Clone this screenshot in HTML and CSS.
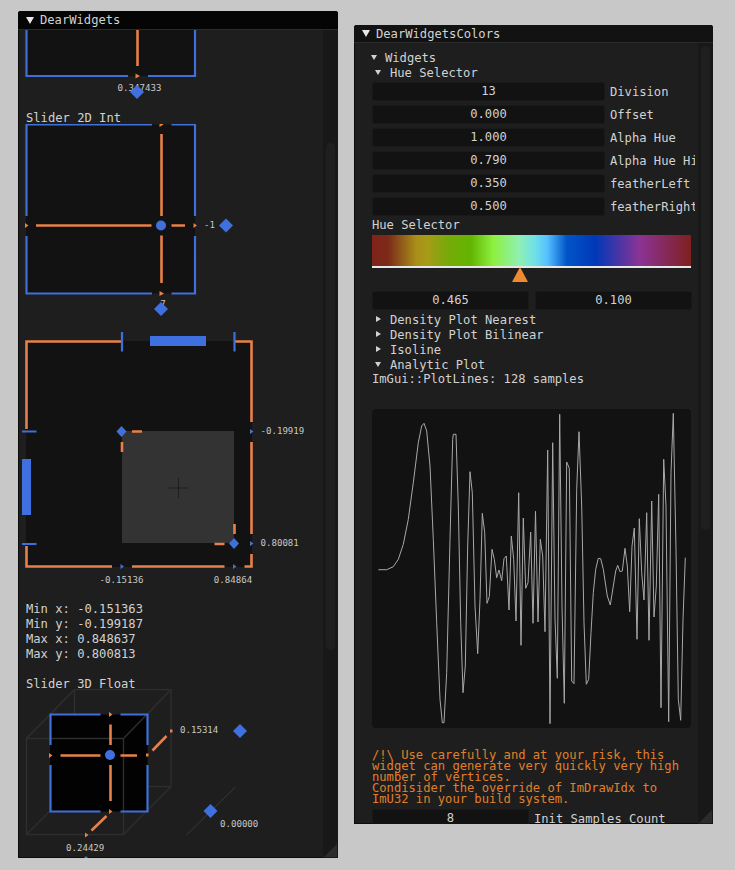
FILE: index.html
```html
<!DOCTYPE html>
<html>
	<head>
		<meta charset="utf-8">
		<title>DearWidgets</title>
		<link rel="stylesheet" href="styles.css">
	</head>
	<body>
		<div class="win win-main">
			<div class="title"><span class="arrow-big"></span>DearWidgets</div>
			<div class="win-body">
				<div class="content">
					<!-- viewBox values are screen coordinates, easier to compare with the shot -->
					<svg class="canvas" width="305" height="80" viewBox="18 30 305 80">
						<rect class="well" x="26" y="20" width="169" height="56"/>
						<path class="blue" d="M26.500 20V76H128M148 76H195V20"/>
						<path class="orange" d="M137.500 20V66"/>
						<path class="tip-o" d="M135.500 73.500l4.500 2.500l-4.500 2.500z"/>
						<text class="small" x="139.500" y="88" text-anchor="middle">0.347433</text>
						<path class="dia" d="M137 85l7 7l-7 7l-7-7z"/>
					</svg>
					<div class="line line-low">Slider 2D Int</div>
					<svg class="canvas" width="305" height="206" viewBox="18 124 305 206">
						<rect class="well" x="26" y="124.500" width="169" height="169"/>
						<path class="blue" d="M152 124.500H26.500V216M26.500 236V293.500H152M171.500 293.500H195V236M195 216V124.500H171.500"/>
						<path class="orange" d="M161.500 134V216M161.500 235.500V283M36 225.500H151.500M171.500 225.500H185"/>
						<circle class="dot" cx="161" cy="225.500" r="5"/>
						<path class="tip-o" d="M159.500 122l4 2.500l-4 2.500zM159.500 291l4.500 2.500l-4.500 2.500zM25 223l3.500 2.500l-3.500 2.500zM193.500 223l3.500 2.500l-3.500 2.500z"/>
						<text class="small" x="204" y="225.500">-1</text>
						<path class="dia" d="M226 218.500l7 7l-7 7l-7-7z"/>
						<text class="small" x="163" y="304" text-anchor="middle">7</text>
						<path class="dia" d="M161 302l7 7l-7 7l-7-7z"/>
					</svg>
					<svg class="canvas" width="305" height="271" viewBox="18 330 305 271">
						<rect class="well" x="26" y="341" width="226" height="226"/>
						<rect class="area" x="122" y="431" width="112" height="112"/>
						<path class="cross" d="M168.500 488H188.500M178.500 478V498"/>
						<path class="orange" d="M122 341.500H26.500V429M26.500 546V566.500H112M132 566.500H224.500M244.500 566.500H251.500V554M251.500 534V442M251.500 422V341.500H235"/>
						<path class="orange" d="M132 431.500H142M122 442V452M214.500 544H224.500M234.500 524V534"/>
						<path class="blue" d="M122 332V351.500M234.500 332V351.500M22 431.500H36.500M22 544H36.500"/>
						<path class="bar" d="M150 336H206V346H150zM22 459H31V515H22z"/>
						<path class="dia" d="M121.500 426l5 5.500l-5 5.500l-5-5.500zM234 538l5 5.500l-5 5.500l-5-5.500z"/>
						<path class="tip-b" d="M120.500 564l3.500 2.500l-3.500 2.500zM233 564l3.500 2.500l-3.500 2.500zM250 429l3.500 2.500l-3.500 2.500zM250 541l3.500 2.500l-3.500 2.500z"/>
						<text class="small" x="260.500" y="431">-0.19919</text>
						<text class="small" x="260.500" y="543">0.80081</text>
						<text class="small" x="121.500" y="580" text-anchor="middle">-0.15136</text>
						<text class="small" x="233" y="580" text-anchor="middle">0.84864</text>
					</svg>
					<div class="lines">
						<div class="line line-15">Min x: -0.151363</div>
						<div class="line line-15">Min y: -0.199187</div>
						<div class="line line-15">Max x: 0.848637</div>
						<div class="line line-15">Max y: 0.800813</div>
					</div>
					<div class="line line-3d">Slider 3D Float</div>
					<svg class="canvas" width="305" height="169" viewBox="18 689 305 169">
						<path class="wire" d="M74.500 689.500H171V786.500H74.500zM26.500 738.500L74.500 689.500M26.500 834.500L50 811"/>
						<rect class="well-3d" x="50" y="714.500" width="97.500" height="97"/>
						<path class="wire" d="M26.500 738.500H123.500V834.500H26.500zM123.500 738.500L171 689.500M123.500 834.500L171 786.500"/>
						<path class="blue" d="M100.500 714.500H50.500V745M50.500 765V811.500H100.500M120.500 811.500H147.500V765M147.500 745V714.500H120.500"/>
						<path class="orange" d="M110.500 724.500V745M110.500 765V801M60.500 755.500H100.500M120.500 755.500H137"/>
						<path class="orange" d="M152.500 750.500L166.500 736M91.500 830.500L106.500 816"/>
						<circle class="dot" cx="110" cy="755" r="5"/>
						<path class="tip-o" d="M109 712l3.500 2.500l-3.500 2.500zM109 809l3.500 2.500l-3.500 2.500zM49 753l3.500 2.500l-3.500 2.500zM146 753.500h2.500v3h-2.500zM85 832.500l3.500 2.500l-3.500 2.500zM170 729.500h2.500v3h-2.500z"/>
						<text class="small" x="180" y="730">0.15314</text>
						<path class="dia" d="M240 724l7 7l-7 7l-7-7z"/>
						<path class="wire-thin" d="M186.500 835L235.500 787"/>
						<path class="dia" d="M210.500 804l7 7l-7 7l-7-7z"/>
						<text class="small" x="220" y="824">0.00000</text>
						<text class="small" x="66" y="848">0.24429</text>
						<path class="dia" d="M86 856l4 4l-4 4l-4-4z"/>
					</svg>
				</div>
				<div class="scrollbar"><div class="thumb thumb-main"></div></div>
			</div>
			<div class="grip"></div>
		</div>

		<div class="win win-colors">
			<div class="title title-off"><span class="arrow-big"></span>DearWidgetsColors</div>
			<div class="win-body">
				<div class="content content-colors">
					<div class="node node-widgets"><span class="arrow-down"></span>Widgets</div>
					<div class="node"><span class="arrow-down"></span>Hue Selector</div>
					<div class="fields">
						<div class="row"><div class="field field-wide">13</div><div class="label">Division</div></div>
						<div class="row"><div class="field field-wide">0.000</div><div class="label">Offset</div></div>
						<div class="row"><div class="field field-wide">1.000</div><div class="label">Alpha Hue</div></div>
						<div class="row"><div class="field field-wide">0.790</div><div class="label">Alpha Hue Hide</div></div>
						<div class="row"><div class="field field-wide">0.350</div><div class="label">featherLeft</div></div>
						<div class="row"><div class="field field-wide">0.500</div><div class="label">featherRight</div></div>
					</div>
					<div class="line hue-title">Hue Selector</div>
					<div class="hue"></div>
					<div class="hue-line"></div>
					<svg class="hue-mark" width="319" height="14" viewBox="372 268 319 14">
						<path class="mark" d="M520 267L528 282H512z"/>
					</svg>
					<div class="row row-half">
						<div class="field field-half">0.465</div>
						<div class="field field-half">0.100</div>
					</div>
					<div class="node"><span class="arrow-right"></span>Density Plot Nearest</div>
					<div class="node"><span class="arrow-right"></span>Density Plot Bilinear</div>
					<div class="node"><span class="arrow-right"></span>Isoline</div>
					<div class="node"><span class="arrow-down"></span>Analytic Plot</div>
					<div class="line line-15">ImGui::PlotLines: 128 samples</div>
					<svg class="plot" width="319" height="319" viewBox="372 408 319 319">
						<polyline class="wave" points="378.3,568.7 386.7,568.7 393.3,565.7 398.3,558.3 403.3,543.3 408.3,518.3 413.3,481.7 418.3,441.7 421.7,425 424,422.3 426.7,430 430,465 433.3,538.3 436.7,621.7 440,698.3 442.3,721.7 444,721.7 446.7,671.7 450,538.3 452.7,438.3 453.3,433.3 456,433.3 458.3,505 460.7,621.7 463,691.7 465.3,665 467.7,545 470,470.7 472.3,491.7 475,605 477.7,652.7 480,598.3 482.3,512.3 484.7,531.7 487,602.3 489.3,595.7 492,548.3 494.3,558.3 496.7,576.7 499,569 501.7,579.7 504,557.7 506.3,555 509,609 511.3,535 513.7,558.3 516,620 518.7,491.7 521,644.3 523.3,517 525.7,587.3 528,581.7 530.7,531 533,622.3 535.5,510.3 538,621 540.3,538.3 542.7,555 545,630.7 547.7,449 550,722.7 552.7,441.7 555,618 557.3,677.3 559.7,413.3 562,605 564.3,702.3 566.7,461 569.3,467.3 571.7,680 574,682.7 576.7,488.3 579,430.7 581.7,505 584,621.7 586.3,683.3 588.7,678.3 591,631.7 593.3,591.7 595.7,568.3 598.3,557.3 600.7,557.7 603.3,568.3 607.3,595 610.3,604 613.3,585 615.7,570 617.7,564.3 620,570.7 622.3,570 625,547.3 627.3,565 629.7,610.7 632,545 634.3,527 637,638.3 639.3,517.7 641.7,571.7 644,599 646.7,511.7 649,639.3 651.7,500 654,616 656.3,585 658.7,493.3 661,706.7 663.7,458.3 666,505 668.7,720.7 671,471.7 673.3,412.3 676,548.3 678.3,698.3 680.7,719.3 683,618.3 685.3,556.7"/>
					</svg>
					<div class="warn">/!\ Use carefully and at your risk, this<br>widget can generate very quickly very high<br>number of vertices.<br>Condisider the override of ImDrawIdx to<br>ImU32 in your build system.</div>
					<div class="row row-last">
						<div class="field field-half">8</div>
						<div class="label">Init Samples Count</div>
					</div>
				</div>
				<div class="scrollbar"><div class="thumb thumb-colors"></div></div>
			</div>
			<div class="grip"></div>
		</div>
	</body>
</html>
```

FILE: styles.css
```css
*{
	margin: 0;
	padding: 0;
	box-sizing: border-box;
}
body{
	background: #c8c8c8;
	font-family: "DejaVu Sans Mono", monospace;
	font-size: 12.15px;
	color: #d2d2d2;
	overflow: hidden;
	height: 870px;
}
.win{
	position: absolute;
	display: flex;
	flex-direction: column;
	background: #1e1e1e;
	border-radius: 3px 3px 0 0;
	overflow: hidden;
	box-shadow: 0 0 0 1px #0c0c0c inset;
}
.win-main{
	left: 18px;
	top: 11px;
	width: 320px;
	height: 847px;
}
.win-colors{
	left: 354px;
	top: 25px;
	width: 359px;
	height: 799px;
}
.title{
	display: flex;
	align-items: center;
	height: 19px;
	flex: none;
	padding-left: 8px;
	background: #050505;
	border-bottom: 1px solid #2a2a2a;
}
.title-off{
	height: 18px;
	background: #121212;
	padding-left: 8px;
}
.arrow-big{
	width: 0;
	height: 0;
	border-left: 4px solid transparent;
	border-right: 4px solid transparent;
	border-top: 7px solid #e8e8e8;
	margin-right: 6px;
}
.win-body{
	display: flex;
	flex: 1;
	min-height: 0;
}
.content{
	width: 305px;
	overflow: hidden;
	padding-left: 8px;
}
.content-colors{
	width: 344px;
	padding: 7px 0 0 18px;
}
.canvas{
	display: block;
	margin-left: -8px;
}
.line{
	height: 14px;
	line-height: 14px;
	white-space: nowrap;
}
.line-low{
	line-height: 17px;
}
.line-15{
	height: 15px;
	line-height: 15px;
}
.lines .line-15{
	line-height: 17px;
}
.line-3d{
	height: 13px;
	line-height: 17px;
	margin-top: 15px;
}
.scrollbar{
	width: 15px;
	flex: none;
	background: #181818;
	padding: 0 3px;
}
.thumb{
	background: #1f1f1f;
	border-radius: 5px;
}
.thumb-main{
	height: 507px;
	margin-top: 113px;
}
.thumb-colors{
	height: 484px;
	margin-top: 3px;
}
.grip{
	position: absolute;
	right: 1px;
	bottom: 1px;
	width: 0;
	height: 0;
	border-left: 13px solid transparent;
	border-bottom: 13px solid #2c2c2c;
}

/* widget drawing */
.well{
	fill: #121212;
}
.well-3d{
	fill: #020202;
}
.area{
	fill: #333333;
}
.cross{
	fill: none;
	stroke: #1e1e1e;
	stroke-width: 1;
}
.blue{
	fill: none;
	stroke: #3f6fd8;
	stroke-width: 2.2;
}
.orange{
	fill: none;
	stroke: #e8804a;
	stroke-width: 2.6;
}
.bar, .dia, .dot{
	fill: #4070e0;
}
.tip-o{
	fill: #e8804a;
}
.tip-b{
	fill: #4070e0;
}
.wire{
	fill: none;
	stroke: #2e2e2e;
	stroke-width: 1.4;
}
.wire-thin{
	fill: none;
	stroke: #3a3a3a;
	stroke-width: 1;
}
.small{
	font-family: "DejaVu Sans Mono", monospace;
	font-size: 9.1px;
	fill: #c8c8c8;
	dominant-baseline: middle;
}

/* colors window */
.node{
	display: flex;
	align-items: center;
	height: 15px;
	white-space: nowrap;
	padding-left: 18px;
	position: relative;
}
.node-widgets{
	padding-left: 13px;
}
.arrow-down{
	position: absolute;
	left: 3px;
	top: 5px;
	width: 0;
	height: 0;
	border-left: 3px solid transparent;
	border-right: 3px solid transparent;
	border-top: 5px solid #d2d2d2;
}
.node-widgets .arrow-down{
	left: -1px;
}
.arrow-right{
	position: absolute;
	left: 4px;
	top: 4px;
	width: 0;
	height: 0;
	border-top: 3px solid transparent;
	border-bottom: 3px solid transparent;
	border-left: 5px solid #d2d2d2;
}
.fields{
	display: flex;
	flex-direction: column;
	gap: 4px;
	margin-top: 2px;
}
.row{
	display: flex;
	align-items: center;
	gap: 5px;
	width: 323px;
	overflow: hidden;
	white-space: nowrap;
}
.field{
	height: 19px;
	line-height: 18px;
	flex: none;
	text-align: center;
	background: #121212;
	border-radius: 4px;
	box-shadow: 0 0 0 1px #191919 inset;
}
.field-wide{
	width: 233px;
}
.field-half{
	width: 157px;
}
.label{
	flex: none;
}
.hue-title{
	height: 15px;
	line-height: 15px;
	margin-top: 2px;
}
.hue{
	height: 31px;
	width: 319px;
	margin-top: 2px;
	background: linear-gradient(to right, #7f2318 0%, #7c2a1a 5%, #a89018 14%, #a89a18 17%, #75ab08 24%, #62b500 31%, #8ef040 38%, #8ff0b0 46%, #70e0e8 51%, #55c0ff 55%, #0055c8 61%, #0038b8 70%, #8c3394 84%, #7f2020 100%);
}
.hue-line{
	height: 2px;
	width: 319px;
	background: #e8e8e8;
}
.hue-mark{
	display: block;
	overflow: visible;
}
.mark{
	fill: #f08a30;
}
.row-half{
	margin-top: 9px;
	gap: 6px;
	margin-bottom: 2px;
}
.plot{
	display: block;
	margin-top: 22px;
	background: #121212;
	border-radius: 4px;
}
.wave{
	fill: none;
	stroke: #a8a8a8;
	stroke-width: 1;
}
.warn{
	margin-top: 22px;
	line-height: 11px;
	color: #e0802a;
	white-space: nowrap;
}
.row-last{
	margin-top: 4px;
}
```
